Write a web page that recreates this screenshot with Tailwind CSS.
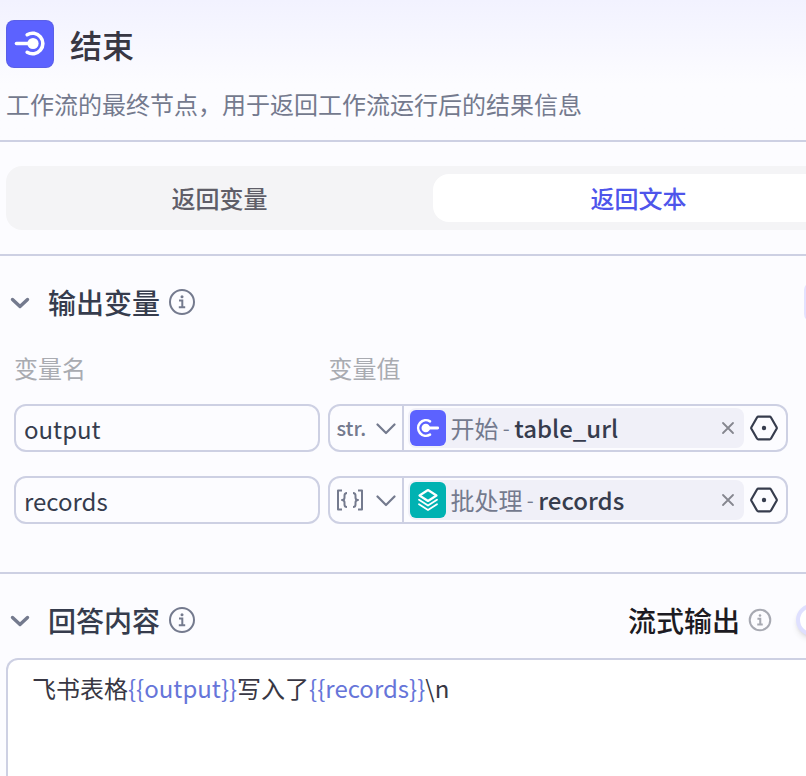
<!DOCTYPE html>
<html lang="zh-CN">
<head>
    <meta charset="UTF-8">
    <meta name="viewport" content="width=device-width, initial-scale=1.0">
    <title>结束</title>
    <script src="https://cdn.jsdelivr.net/npm/@tailwindcss/browser@4"></script>
</head>
<body class="min-h-screen overflow-hidden bg-[#fcfcff] font-['Noto_Sans_CJK_SC',sans-serif] text-2xl leading-8 text-[#383743]">
    <!-- The panel runs a little past the right edge of the window -->
    <main class="-mr-13 flex h-screen flex-col">

        <!-- Node header -->
        <header class="border-b-2 border-[#cdd0e3] bg-linear-to-b from-[#f2f2ff] to-[#fcfcff] to-60% px-1.5 pt-5 pb-5">
            <div class="flex items-center gap-4">
                <svg class="size-12" viewBox="0 0 48 48" fill="none">
                    <rect width="48" height="48" rx="8" fill="#5a5fe8"/>
                    <rect x="1" y="1" width="46" height="46" rx="7" fill="#5c62ff"/>
                    <path d="M10.500 23.500H27" stroke="#fff" stroke-width="3.600" stroke-linecap="round"/>
                    <circle cx="27" cy="23.500" r="5.600" fill="#fff"/>
                    <path d="M21.200 14.700A10.300 10.300 0 1 1 21.200 32.300" stroke="#fff" stroke-width="3.600" stroke-linecap="round"/>
                </svg>
                <h1 class="text-[32px] leading-12 font-medium">结束</h1>
            </div>
            <p class="mt-5 text-[#747a8e]">工作流的最终节点，用于返回工作流运行后的结果信息</p>
        </header>

        <!-- Return mode -->
        <div class="border-b-2 border-[#cdd0e3] px-1.5 py-6">
            <div class="grid grid-cols-2 gap-2 rounded-2xl bg-[#f4f4f6] p-2 font-medium" role="tablist">
                <button type="button" role="tab" aria-selected="false" class="h-12 rounded-2xl text-[#5f5e68]">返回变量</button>
                <button type="button" role="tab" aria-selected="true" class="h-12 rounded-2xl bg-white text-[#4e55eb]">返回文本</button>
            </div>
        </div>

        <!-- Output variables -->
        <section class="border-b-2 border-[#cdd0e3] px-2 pt-6.5 pb-12">
            <div class="flex h-10 items-center">
                <svg class="size-6" viewBox="0 0 24 24" fill="none" stroke="#747a8e" stroke-width="3.400" stroke-linecap="round" stroke-linejoin="round">
                    <path d="M4.500 9.500L12 16.500L19.500 9.500"/>
                </svg>
                <h2 class="ml-4 text-[28px] leading-10 font-medium text-[#363c4d]">输出变量</h2>
                <svg class="ml-2 size-7" viewBox="0 0 28 28" fill="none" stroke="#747a8e" stroke-width="2">
                    <circle cx="14" cy="14" r="12"/>
                    <path d="M11 12.500H14.300V19M10.800 19.300H17.200"/>
                    <circle cx="14" cy="8.800" r="1.500" fill="#747a8e" stroke="none"/>
                </svg>
                <button type="button" aria-label="添加变量" class="mr-1.5 ml-auto size-10 rounded-lg bg-[#e3e3ff]"></button>
            </div>

            <div class="mt-7 mr-15.5 ml-1.5 grid grid-cols-[2fr_3fr] gap-x-2">
                <span class="leading-9 text-[#a9abb1]">变量名</span>
                <span class="leading-9 text-[#a9abb1]">变量值</span>

                <input type="text" value="output" aria-label="变量名" class="mt-4.5 h-12 min-w-0 rounded-xl border-2 border-[#cdd0e3] px-2 text-[#363c4d]">
                <div class="mt-4.5 flex h-12 items-center rounded-xl border-2 border-[#cdd0e3] pr-2">
                    <button type="button" class="flex h-full w-[74px] items-center justify-between border-r-2 border-[#cdd0e3] pr-1.5 pl-1.5 text-xl font-medium text-[#747a8e]">
                        str.
                        <svg class="size-5" viewBox="0 0 20 20" fill="none" stroke="#747a8e" stroke-width="2.200" stroke-linecap="round" stroke-linejoin="round"><path d="M1.500 6.500L10 15L18.500 6.500"/></svg>
                    </button>
                    <div class="ml-1 flex h-10 flex-1 items-center rounded-lg bg-[#f0f0f8] pr-2 pl-0.5">
                        <svg class="size-9" viewBox="0 0 36 36" fill="none">
                            <rect width="36" height="36" rx="6" fill="#5c62ff"/>
                            <path d="M16 18H27.700" stroke="#fff" stroke-width="2.800" stroke-linecap="round"/>
                            <circle cx="15.800" cy="18" r="4.300" fill="#fff"/>
                            <path d="M20 11.300A7.800 7.800 0 1 0 20 24.700" stroke="#fff" stroke-width="2.600" stroke-linecap="round"/>
                        </svg>
                        <span class="ml-1 text-[#747a8e]">开始</span>
                        <span class="text-xl whitespace-pre text-[#747a8e]"> - </span>
                        <span class="font-medium text-[#363c4d]">table_url</span>
                        <button type="button" aria-label="清除" class="ml-auto">
                            <svg class="size-4" viewBox="0 0 16 16" fill="none" stroke="#85868f" stroke-width="1.800" stroke-linecap="round"><path d="M3 3L13 13M13 3L3 13"/></svg>
                        </button>
                    </div>
                    <button type="button" aria-label="设置" class="ml-1.5">
                        <svg class="size-7" viewBox="0 0 28 28" fill="none" stroke="#363c4d" stroke-width="2.200" stroke-linejoin="round">
                            <path d="M8.300 2.700H19.700Q20.500 2.700 21 3.500L26.600 13.200Q27 14 26.600 14.800L21 24.500Q20.500 25.300 19.700 25.300H8.300Q7.500 25.300 7 24.500L1.400 14.800Q1 14 1.400 13.200L7 3.500Q7.500 2.700 8.300 2.700Z"/>
                            <circle cx="14" cy="14" r="2.200" fill="#363c4d" stroke="none"/>
                        </svg>
                    </button>
                </div>

                <input type="text" value="records" aria-label="变量名" class="mt-6 h-12 min-w-0 rounded-xl border-2 border-[#cdd0e3] px-2 text-[#363c4d]">
                <div class="mt-6 flex h-12 items-center rounded-xl border-2 border-[#cdd0e3] pr-2">
                    <button type="button" aria-label="数组" class="flex h-full w-[74px] items-center justify-between border-r-2 border-[#cdd0e3] pr-1.5 pl-1.5 text-[#747a8e]">
                        <svg class="h-6 w-7" viewBox="0 0 28 24" fill="none" stroke="#747a8e" stroke-width="2" stroke-linejoin="round">
                            <path d="M6 2.500H2V21.500H6M22 2.500H26V21.500H22"/>
                            <path d="M11 5Q8.500 5 8.500 7.500V9.500Q8.500 12 6 12Q8.500 12 8.500 14.500V16.500Q8.500 19 11 19M17 5Q19.500 5 19.500 7.500V9.500Q19.500 12 22 12Q19.500 12 19.500 14.500V16.500Q19.500 19 17 19"/>
                        </svg>
                        <svg class="size-5" viewBox="0 0 20 20" fill="none" stroke="#747a8e" stroke-width="2.200" stroke-linecap="round" stroke-linejoin="round"><path d="M1.500 6.500L10 15L18.500 6.500"/></svg>
                    </button>
                    <div class="ml-1 flex h-10 flex-1 items-center rounded-lg bg-[#f0f0f8] pr-2 pl-0.5">
                        <svg class="size-9" viewBox="0 0 36 36" fill="none" stroke="#fff" stroke-width="1.800" stroke-linecap="round" stroke-linejoin="round">
                            <rect width="36" height="36" rx="6" fill="#00b2b2" stroke="none"/>
                            <path d="M18 8L26.500 13.500L18 19L9.500 13.500Z" stroke-width="2.200"/>
                            <path d="M9 17.800L18 23.500L27 17.800M9 22.300L18 28L27 22.300"/>
                        </svg>
                        <span class="ml-1 text-[#747a8e]">批处理</span>
                        <span class="text-xl whitespace-pre text-[#747a8e]"> - </span>
                        <span class="font-medium text-[#363c4d]">records</span>
                        <button type="button" aria-label="清除" class="ml-auto">
                            <svg class="size-4" viewBox="0 0 16 16" fill="none" stroke="#85868f" stroke-width="1.800" stroke-linecap="round"><path d="M3 3L13 13M13 3L3 13"/></svg>
                        </button>
                    </div>
                    <button type="button" aria-label="设置" class="ml-1.5">
                        <svg class="size-7" viewBox="0 0 28 28" fill="none" stroke="#363c4d" stroke-width="2.200" stroke-linejoin="round">
                            <path d="M8.300 2.700H19.700Q20.500 2.700 21 3.500L26.600 13.200Q27 14 26.600 14.800L21 24.500Q20.500 25.300 19.700 25.300H8.300Q7.500 25.300 7 24.500L1.400 14.800Q1 14 1.400 13.200L7 3.500Q7.500 2.700 8.300 2.700Z"/>
                            <circle cx="14" cy="14" r="2.200" fill="#363c4d" stroke="none"/>
                        </svg>
                    </button>
                </div>
            </div>
        </section>

        <!-- Answer content -->
        <section class="flex flex-1 flex-col px-1.5 pt-6.5">
            <div class="flex h-10 items-center px-0.5">
                <svg class="size-6" viewBox="0 0 24 24" fill="none" stroke="#747a8e" stroke-width="3.400" stroke-linecap="round" stroke-linejoin="round">
                    <path d="M4.500 9.500L12 16.500L19.500 9.500"/>
                </svg>
                <h2 class="ml-4 text-[28px] leading-10 font-medium text-[#363c4d]">回答内容</h2>
                <svg class="ml-2 size-7" viewBox="0 0 28 28" fill="none" stroke="#747a8e" stroke-width="2">
                    <circle cx="14" cy="14" r="12"/>
                    <path d="M11 12.500H14.300V19M10.800 19.300H17.200"/>
                    <circle cx="14" cy="8.800" r="1.500" fill="#747a8e" stroke="none"/>
                </svg>
                <label for="stream" class="ml-auto text-[28px] leading-10 font-medium text-[#1c1b22]">流式输出</label>
                <svg class="mr-6 ml-2 size-6" viewBox="0 0 28 28" fill="none" stroke="#a7a9b2" stroke-width="2.400">
                    <circle cx="14" cy="14" r="12"/>
                    <path d="M11 12.500H14.300V19M10.800 19.300H17.200"/>
                    <circle cx="14" cy="8.800" r="1.500" fill="#a7a9b2" stroke="none"/>
                </svg>
                <input id="stream" type="checkbox" class="mr-1.5 h-8 w-12 appearance-none rounded-full border-4 border-[#dfe0ff] bg-white shadow-md">
            </div>
            <div contenteditable="true" role="textbox" aria-label="回答内容" class="mt-4.5 flex-1 rounded-t-xl border-2 border-b-0 border-[#cdd0e3] bg-white px-6 py-3 outline-none">飞书表格<span class="text-[#6675d9]">{{output}}</span>写入了<span class="text-[#6675d9]">{{records}}</span>\n</div>
        </section>
    </main>
</body>
</html>
